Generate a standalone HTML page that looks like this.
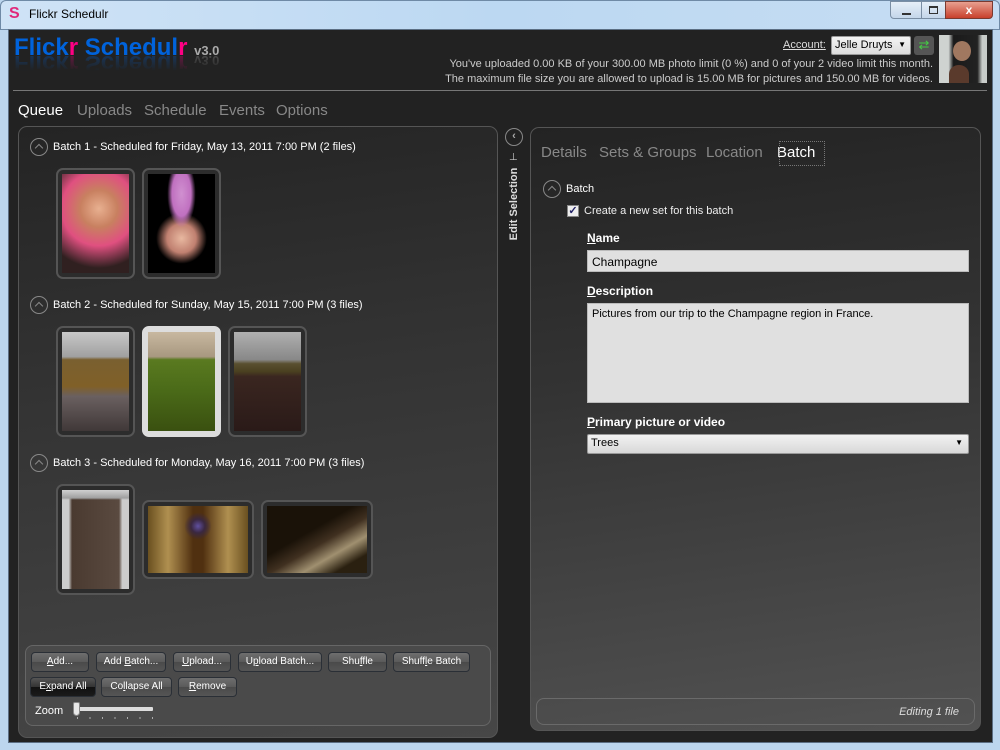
<!DOCTYPE html>
<html><head><style>
*{margin:0;padding:0;box-sizing:border-box}
body{width:1000px;height:750px;overflow:hidden;background:#bcd6ee;font-family:"Liberation Sans",sans-serif;font-size:11px;color:#fff;position:relative}
.a{position:absolute}
#title{left:0;top:0;width:1000px;height:30px;background:linear-gradient(90deg,#cfe3f6,#bcd8f2 50%,#c6ddf3);border-radius:6px 6px 0 0;border:1px solid #6f8aa6}
#main{left:8px;top:29px;width:985px;height:714px;background:#222;border:1px solid #5c6f84}
.btn{position:absolute;height:20px;border:1px solid #2a2f36;border-radius:4px;background:linear-gradient(#6e6e6e,#5a5a5a 50%,#4a4a4a 51%,#555);color:#fff;font-size:10px;text-align:center;line-height:18px}
.circ{position:absolute;width:18px;height:18px;border:1.5px solid #888;border-radius:50%}
.circ:after{content:"";position:absolute;left:5px;top:6px;width:5px;height:5px;border-left:1.5px solid #888;border-top:1.5px solid #888;transform:rotate(45deg)}
.hdr{position:absolute;font-size:11px;color:#fff}
.fr{position:absolute;border:2px solid #555;border-radius:7px;background:#2c2c2c}
.ph{position:absolute;left:4px;top:4px;right:4px;bottom:4px}
.tab{position:absolute;font-size:15px;color:#888}
.lbl{position:absolute;font-size:12px;font-weight:bold;color:#fff}
.inp{position:absolute;background:#e0e0e0;border:1px solid #bbb;color:#000;font-size:11px;padding:4px}
</style></head><body>
<div class="a" id="title"></div>
<div class="a" style="left:9px;top:6px;width:14px;height:16px;font:bold 16px 'Liberation Sans';color:#e0287a;line-height:16px">S</div>
<div class="a" style="left:29px;top:7px;font-size:12px;color:#000">Flickr Schedulr</div>
<div class="a" style="left:890px;top:1px;width:32px;height:18px;border:1px solid #7a8ea4;border-radius:0 0 0 4px;background:linear-gradient(#e6eff8,#c4d6ea)"><div class="a" style="left:11px;top:11px;width:9px;height:2px;background:#333"></div></div>
<div class="a" style="left:921px;top:1px;width:25px;height:18px;border:1px solid #7a8ea4;background:linear-gradient(#e6eff8,#c4d6ea)"><div class="a" style="left:7px;top:4px;width:9px;height:8px;border:1px solid #333;border-top-width:2px"></div></div>
<div class="a" style="left:945px;top:1px;width:48px;height:18px;border:1px solid #7a3a30;border-radius:0 0 4px 0;background:linear-gradient(#e8a090,#c8402c);color:#fff;font:bold 12px 'Liberation Sans';text-align:center;line-height:16px">x</div>
<div class="a" id="main"></div>
<div class="a" style="left:14px;top:34px;font:bold 24px 'Liberation Sans';color:#0063dc">Flick<span style="color:#ff0084">r</span> Schedul<span style="color:#ff0084">r</span> <span style="font-size:13px;color:#aaa">v3.0</span></div>
<div class="a" style="left:14px;top:55px;font:bold 24px 'Liberation Sans';color:#0063dc;transform:scaleY(-1);opacity:.3;height:16px;overflow:hidden;line-height:16px;-webkit-mask-image:linear-gradient(transparent,#000);mask-image:linear-gradient(transparent,#000)">Flick<span style="color:#ff0084">r</span> Schedul<span style="color:#ff0084">r</span> <span style="font-size:13px;color:#aaa">v3.0</span></div>
<div class="a" style="left:13px;top:90px;width:974px;height:1px;background:#777"></div>
<div class="a" style="left:783px;top:39px;font-size:11px;text-decoration:underline;color:#ddd">Account:</div>
<div class="a" style="left:831px;top:36px;width:80px;height:19px;background:linear-gradient(#f4f4f4,#dcdcdc);border:1px solid #999;border-radius:2px;color:#000;font-size:11px;padding:2px 3px">Jelle Druyts<span style="position:absolute;right:4px;top:3px;font-size:8px">▼</span></div>
<div class="a" style="left:914px;top:36px;width:20px;height:19px;background:#555;border-radius:3px;color:#4c4;font-size:13px;text-align:center;line-height:18px">⇄</div>
<div class="a" style="left:939px;top:35px;width:48px;height:48px;background:linear-gradient(90deg,#cfd3d0 0,#cfd3d0 20%,#1a1a1a 30%,#222 80%,#c8ccc9 90%)"><div class="a" style="left:14px;top:6px;width:18px;height:20px;border-radius:50%;background:#a07860"></div><div class="a" style="left:10px;top:30px;width:20px;height:18px;border-radius:50% 50% 0 0;background:#5a3a2c"></div></div>
<div class="a" style="right:67px;top:57px;font-size:11px;color:#ccc;text-align:right;line-height:15px">You've uploaded 0.00 KB of your 300.00 MB photo limit (0 %) and 0 of your 2 video limit this month.<br>The maximum file size you are allowed to upload is 15.00 MB for pictures and 150.00 MB for videos.</div>
<div class="tab" style="left:18px;top:102px;color:#fff">Queue</div>
<div class="tab" style="left:77px;top:102px">Uploads</div>
<div class="tab" style="left:144px;top:102px">Schedule</div>
<div class="tab" style="left:219px;top:102px">Events</div>
<div class="tab" style="left:276px;top:102px">Options</div>
<div class="a" style="left:18px;top:126px;width:480px;height:612px;border:1px solid #555;border-radius:9px;background:linear-gradient(172deg,#242424,#333 40%,#474747)"></div>
<div class="circ" style="left:30px;top:138px"></div><div class="hdr" style="left:53px;top:141px">Batch 1 - Scheduled for Friday, May 13, 2011 7:00 PM (2 files)</div>
<div class="fr" style="left:56px;top:168px;width:79px;height:111px"><div class="ph" style="background:radial-gradient(circle at 55% 35%,#e8b090 0,#c88060 25%,#e05080 50%,#302020 80%)"></div></div>
<div class="fr" style="left:142px;top:168px;width:79px;height:111px"><div class="ph" style="background:radial-gradient(ellipse at 50% 20%,#d090d0 0,#c070c0 20%,transparent 30%),radial-gradient(circle at 50% 65%,#e8b8a0 0,#c08070 20%,#000 35%),linear-gradient(transparent 80%,#c04090 85%)"></div></div>
<div class="circ" style="left:30px;top:296px"></div><div class="hdr" style="left:53px;top:299px">Batch 2 - Scheduled for Sunday, May 15, 2011 7:00 PM (3 files)</div>
<div class="fr" style="left:56px;top:326px;width:79px;height:111px"><div class="ph" style="background:linear-gradient(#c8c8c8 0,#a0a0a0 25%,#7a6030 28%,#806028 55%,#6a6060 65%,#403838 100%)"></div></div>
<div class="fr" style="left:142px;top:326px;width:79px;height:111px;border-color:#ddd;background:#ddd"><div class="ph" style="background:linear-gradient(#c8b8a0 0,#a89880 25%,#5a7a20 28%,#4a6a18 60%,#3a5010 100%)"></div></div>
<div class="fr" style="left:228px;top:326px;width:79px;height:111px"><div class="ph" style="background:linear-gradient(#b0b0b0 0,#888 28%,#5a5030 32%,#4a4020 40%,#3a2620 45%,#2a1a18 100%)"></div></div>
<div class="circ" style="left:30px;top:454px"></div><div class="hdr" style="left:53px;top:457px">Batch 3 - Scheduled for Monday, May 16, 2011 7:00 PM (3 files)</div>
<div class="fr" style="left:56px;top:484px;width:79px;height:111px"><div class="ph" style="background:linear-gradient(#d0d0d0 0,#a0a0a0 8%,transparent 10%),linear-gradient(90deg,#ccc 10%,#4a3a30 15%,#5a4a40 85%,#ccc 90%);"></div></div>
<div class="fr" style="left:142px;top:500px;width:112px;height:79px"><div class="ph" style="background:radial-gradient(circle at 50% 30%,#6050a0 0,#3a2840 10%,transparent 20%),linear-gradient(90deg,#6a5020,#b09050 20%,#503010 45%,#503010 55%,#b09050 80%,#6a5020)"></div></div>
<div class="fr" style="left:261px;top:500px;width:112px;height:79px"><div class="ph" style="background:linear-gradient(150deg,#1a1208 40%,#403020 55%,#a09070 70%,#2a2010 85%)"></div></div>
<div class="a" style="left:25px;top:645px;width:466px;height:81px;border:1px solid #666;border-radius:8px;background:#4a4a4a"></div>
<div class="btn" style="left:31px;top:652px;width:58px"><u>A</u>dd...</div>
<div class="btn" style="left:96px;top:652px;width:70px">Add <u>B</u>atch...</div>
<div class="btn" style="left:173px;top:652px;width:58px"><u>U</u>pload...</div>
<div class="btn" style="left:238px;top:652px;width:84px">U<u>p</u>load Batch...</div>
<div class="btn" style="left:328px;top:652px;width:59px">Shu<u>f</u>fle</div>
<div class="btn" style="left:393px;top:652px;width:77px">Shuff<u>l</u>e Batch</div>
<div class="btn" style="left:30px;top:677px;width:66px;background:linear-gradient(#555,#333 50%,#111 51%,#1a1a1a)">E<u>x</u>pand All</div>
<div class="btn" style="left:101px;top:677px;width:71px">Co<u>l</u>lapse All</div>
<div class="btn" style="left:178px;top:677px;width:59px"><u>R</u>emove</div>
<div class="a" style="left:35px;top:705px;font-size:11px">Zoom</div>
<div class="a" style="left:76px;top:707px;width:77px;height:4px;background:#ddd;border-radius:1px"></div>
<div class="a" style="left:73px;top:702px;width:7px;height:14px;background:#e8e8e8;border:1px solid #888;border-radius:2px 2px 4px 4px"></div>
<div class="a" style="left:77px;top:717px;width:78px;height:2px;background:repeating-linear-gradient(90deg,#aaa 0,#aaa 1px,transparent 1px,transparent 12.5px)"></div>
<div class="a" style="left:505px;top:128px;width:18px;height:18px;border:1.5px solid #888;border-radius:50%;color:#aaa;font-size:11px;text-align:center;line-height:14px;font-weight:bold">‹</div>
<div class="a" style="left:509px;top:152px;font-size:10px;color:#ccc">⊥</div>
<div class="a" style="left:450px;top:198px;width:128px;text-align:center;transform:rotate(-90deg);font-size:11px;font-weight:bold;color:#ddd">Edit Selection</div>
<div class="a" style="left:530px;top:127px;width:451px;height:604px;border:1px solid #555;border-radius:9px;background:linear-gradient(172deg,#232323,#333 40%,#525252)"></div>
<div class="tab" style="left:541px;top:144px">Details</div>
<div class="tab" style="left:599px;top:144px">Sets &amp; Groups</div>
<div class="tab" style="left:706px;top:144px">Location</div>
<div class="tab" style="left:777px;top:144px;color:#fff">Batch</div>
<div class="a" style="left:779px;top:141px;width:46px;height:25px;border:1px dotted #777"></div>
<div class="circ" style="left:543px;top:180px"></div>
<div class="a" style="left:566px;top:183px;font-size:11px">Batch</div>
<div class="a" style="left:567px;top:205px;width:12px;height:12px;background:#eee;border:1px solid #888;color:#226;font-size:11px;line-height:10px;text-align:center;font-weight:bold">✓</div>
<div class="a" style="left:584px;top:205px;font-size:11px;color:#eee">Create a new set for this batch</div>
<div class="lbl" style="left:587px;top:231px"><u>N</u>ame</div>
<div class="inp" style="left:587px;top:250px;width:382px;height:22px;font-size:12px">Champagne</div>
<div class="lbl" style="left:587px;top:284px"><u>D</u>escription</div>
<div class="inp" style="left:587px;top:303px;width:382px;height:100px">Pictures from our trip to the Champagne region in France.</div>
<div class="lbl" style="left:587px;top:415px"><u>P</u>rimary picture or video</div>
<div class="inp" style="left:587px;top:434px;width:382px;height:20px;padding:2px 3px;background:linear-gradient(#f2f2f2,#d8d8d8);border-color:#999;border-radius:2px">Trees<span style="position:absolute;right:5px;top:3px;font-size:8px">▼</span></div>
<div class="a" style="left:536px;top:698px;width:439px;height:27px;border:1px solid #6a6a6a;border-radius:8px"></div>
<div class="a" style="right:41px;top:706px;font-size:11px;font-style:italic;color:#ddd">Editing 1 file</div>
</body></html>
